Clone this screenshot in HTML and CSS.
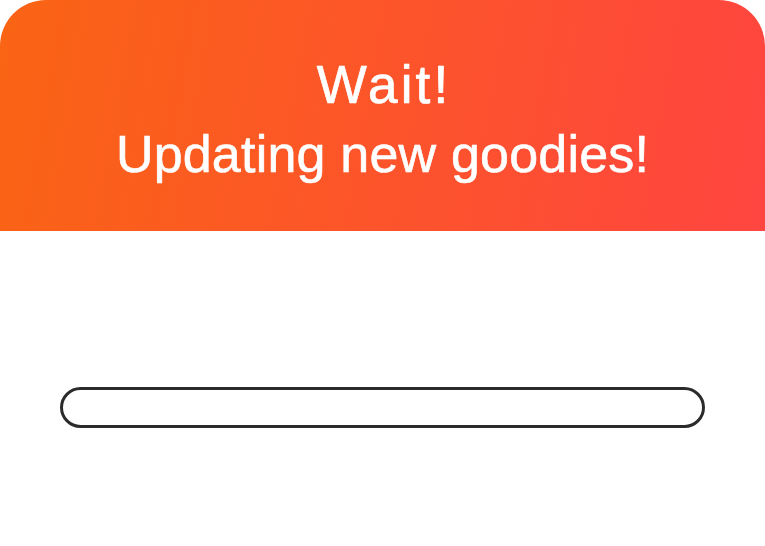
FILE: index.html
```html
<!DOCTYPE html>
<html>
<head>
<meta charset="utf-8">
<link rel="stylesheet" href="styles.css">
</head>
<body>
<div class="card">
  <header class="banner">
    <h1 class="title">Wait!</h1>
    <p class="subtitle">Updating new goodies!</p>
  </header>
  <main class="content">
    <div class="progress"><div class="progress-fill"></div></div>
  </main>
</div>
</body>
</html>
```
FILE: styles.css
```css
html, body {
  margin: 0;
  padding: 0;
  background: #ffffff;
}
.card {
  width: 765px;
  height: 546px;
  display: flex;
  flex-direction: column;
  font-family: "Liberation Sans", Arial, sans-serif;
}
.banner {
  height: 231px;
  box-sizing: border-box;
  border-radius: 46px 46px 0 0;
  background: linear-gradient(100deg, #fa6414 0%, #ff4540 100%);
  color: #ffffff;
  text-align: center;
  padding-top: 53px;
}
.title {
  margin: 0;
  font-size: 53px;
  font-weight: 400;
  line-height: 64px;
  letter-spacing: 3.2px;
  padding-left: 3.2px;
  -webkit-text-stroke: 0.7px #ffffff;
}
.subtitle {
  margin: 7px 0 0 0;
  font-size: 52px;
  line-height: 60px;
  letter-spacing: 0.2px;
  -webkit-text-stroke: 0.6px #ffffff;
}
.content {
  flex: 1;
  padding: 156px 60px 0 60px;
}
.progress {
  height: 41px;
  box-sizing: border-box;
  border: 3px solid #2b2b2b;
  border-radius: 21px;
  width: 645px;
}
.progress-fill {
  width: 0;
}
```
